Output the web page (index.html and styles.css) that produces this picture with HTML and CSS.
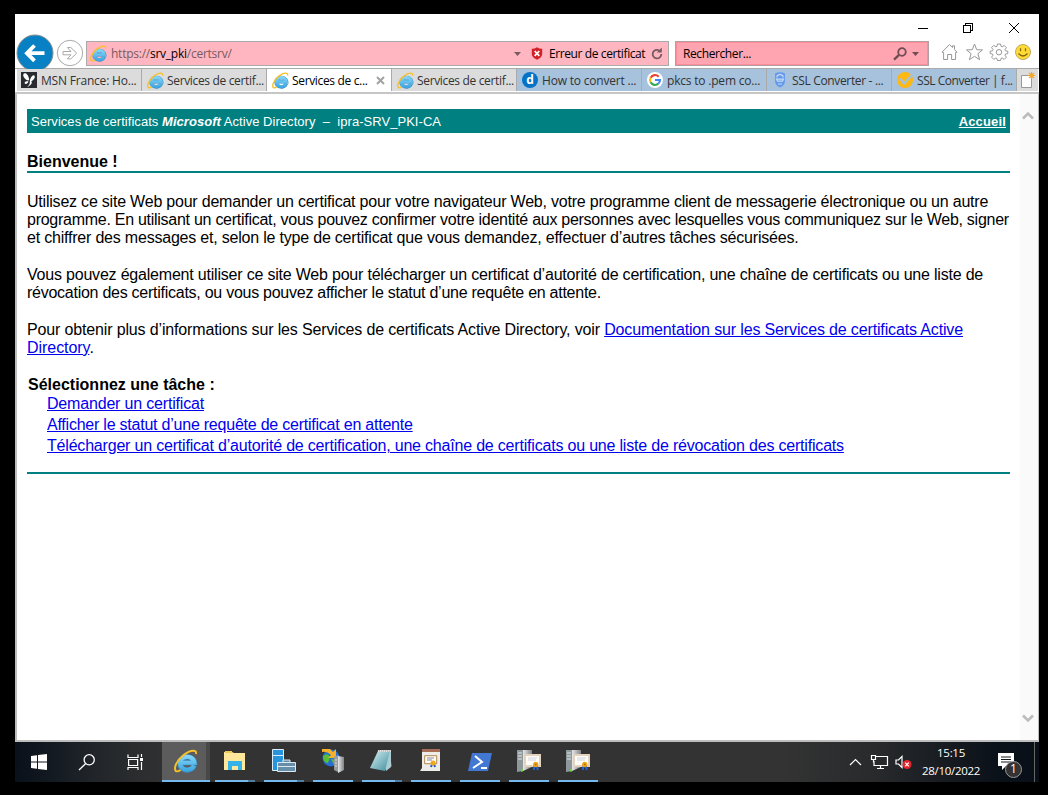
FILE: index.html
```html
<!DOCTYPE html>
<html lang="fr">
<head>
<meta charset="utf-8">
<title>Services de certificats Microsoft Active Directory</title>
<link rel="stylesheet" href="styles.css">
</head>
<body>
<svg class="defs" width="0" height="0" aria-hidden="true">
  <defs>
    <linearGradient id="ieBlue" gradientUnits="userSpaceOnUse" x1="0" y1="3" x2="0" y2="15"><stop offset="0" stop-color="#8fdcfb"/><stop offset="1" stop-color="#3aa5e2"/></linearGradient>
    <linearGradient id="metal" x1="0" x2="1"><stop offset="0" stop-color="#e8e8e8"/><stop offset="1" stop-color="#7d8387"/></linearGradient>
    <linearGradient id="glass" x1="0" y1="0" x2="1" y2="1"><stop offset="0" stop-color="#d7f2f4"/><stop offset="1" stop-color="#3f8c9c"/></linearGradient>
    <symbol id="ie" viewBox="0 0 16 16">
      <path d="M13.5 11A4.9 4.4 0 1 1 13.7 9.2H5.4" fill="none" stroke="#3b8fc4" stroke-width="3.4"/>
      <path d="M13.3 11A4.8 4.3 0 1 1 13.6 9.2H5.4" fill="none" stroke="url(#ieBlue)" stroke-width="2.7"/>
      <path d="M14.6 3.4C15 1.8 14.3 1.1 12.8 1.1 9 1.1 2.8 6 1.1 10.8.2 13.4.7 15.1 2.4 14.9c.8-.1 1.4-.5 2-.9" fill="none" stroke="#f6c12c" stroke-width="1.3"/>
    </symbol>
    <symbol id="certserver" viewBox="0 0 26 24">
      <path d="M1 1h6v21l-6 1z" fill="#8e979a"/><path d="M7 1h9v17l-9 4z" fill="url(#metal)"/>
      <path d="M2 4h4M2 7h4M2 10h4" stroke="#dfe6e8"/><circle cx="6" cy="21.5" r="1.2" fill="#69df39"/>
      <path d="M8 5h17v13H8z" fill="#e5d2bd"/><path d="M10 7h13v9H10z" fill="#fffdf8"/>
      <path d="M12 9h9M12 11h8" stroke="#d1d4df"/><path d="M18.5 17l-.8 4M21 17l.8 4" stroke="#2464d5" stroke-width="2"/>
      <circle cx="19.7" cy="15.5" r="2.7" fill="#efa51b"/><circle cx="19.7" cy="15.5" r="1" fill="#bd7300"/>
    </symbol>
  </defs>
</svg>
<div class="window">
  <header class="chrome">
    <div class="caption">
      <svg width="104" height="14" viewBox="0 0 104 14" fill="none" stroke="#000" shape-rendering="crispEdges"><path d="M1 7.5h10M46.5 4.5h7v7h-7zM48.5 4V2.5h7v7H54"/><path d="M92 2l10 10M102 2L92 12" shape-rendering="auto"/></svg>
    </div>
    <div class="nav">
      <svg class="back" width="38" height="35" viewBox="0 0 38 35"><circle cx="19" cy="19" r="18" fill="#0881c4" stroke="#8c8f91"/><path d="M28.5 19.2H12M18.5 11.5l-7.6 7.7 7.6 7.7" fill="none" stroke="#fff" stroke-width="3.8"/></svg>
      <svg class="forward" width="28" height="28" viewBox="0 0 28 28" fill="#fff" stroke="#aaa"><circle cx="14" cy="14" r="12.7"/><path d="M7 12.5h8l-3.6-4h3.4l5.9 5.6-5.9 5.8h-3.4l3.6-4.1H7z"/></svg>
      <div class="address">
        <svg class="addr-ie" width="17" height="17"><use href="#ie"/></svg>
        <span class="url">https://<b>srv_pki</b>/certsrv/</span>
        <svg width="7" height="4" viewBox="0 0 7 4"><path d="M0 0h7L3.5 4z" fill="#765b60"/></svg>
        <svg class="shield" width="12" height="13" viewBox="0 0 12 13"><path d="M.8 1.8Q3.5 2 6 .2q2.5 1.8 5.2 1.6V7Q11 10.5 6 12.8 1 10.5.8 7z" fill="#d31f27"/><path d="M3.7 4l4.6 4.8M8.3 4L3.7 8.8" stroke="#fff" stroke-width="1.8"/></svg>
        <span class="cert-error">Erreur de certificat</span>
        <svg class="reload" width="12" height="13" viewBox="0 0 12 13"><path d="M10.3 7A4.3 4.3 0 1 1 8 3.3" fill="none" stroke="#775a60" stroke-width="1.8"/><path d="M10.8.5v5H5.8z" fill="#775a60"/></svg>
      </div>
      <div class="search">
        <span>Rechercher...</span>
        <svg width="27" height="14" viewBox="0 0 27 14"><circle cx="9" cy="5" r="3.8" fill="none" stroke="#6f4d53" stroke-width="1.8"/><path d="M6 7.8L1 12.6" stroke="#6f4d53" stroke-width="2.3"/><path d="M19 5h7l-3.5 4z" fill="#6f4d53"/></svg>
      </div>
      <svg class="tools" width="92" height="18" viewBox="0 0 92 18" fill="#fff" stroke="#989898">
        <path d="M1 9.2L8.5 1.5l3 3V2.8h2v3.7L16 9.2l-1.4.3V16.5h-4v-5h-4v5h-4V9.5z"/>
        <path d="M33.5 1l2.2 5.7 5.8.2-4.6 3.8 1.7 6-5.1-3.4-5.1 3.4 1.7-6-4.6-3.8 5.8-.2z"/>
        <path d="M56.4 1h3.2l.4 2.3 1.2.5 2-1.4 2.2 2.2-1.4 2 .5 1.2 2.3.4v2.4l-2.3.4-.5 1.2 1.4 2-2.2 2.2-2-1.4-1.2.5-.4 2h-3.2l-.4-2-1.2-.5-2 1.4-2.2-2.2 1.4-2-.5-1.2-2.3-.4V8.2l2.3-.4.5-1.2-1.4-2 2.2-2.2 2 1.4 1.2-.5z"/><circle cx="58" cy="9.2" r="2.7"/>
        <circle cx="82" cy="9" r="7.5" fill="#ffdc35" stroke="#c2a85b"/><path d="M79.5 5.2v3M84.5 5.2v3M77.5 10.5q4.5 5 9 0" fill="none" stroke="#866514" stroke-width="1.3"/>
      </svg>
    </div>
    <div class="tabs">
      <div class="tab first"><svg width="16" height="16" viewBox="0 0 16 16"><path d="M0 0h16v16H0z" fill="#292b30"/><path d="M7.6 8.6C4.2 8 1.8 4.5 2.3 2.2 3.6.4 7 1.2 8.2 7.6zM7.4 9.4c-2-.2-4 .4-3.8 1.8 1 1.4 3.2.6 3.8-1.8zM8.8 9.5C9 6 11.5 2.5 13.3 3.4c1.4 1.6-.3 4.5-3 5.8 1.5 1.8-.6 4.5-4.2 5.8 2-1.8 3-3.3 2.7-5.5z" fill="#fff"/></svg><span>MSN France: Ho...</span></div>
      <div class="tab"><svg width="17" height="17"><use href="#ie"/></svg><span>Services de certif...</span></div>
      <div class="tab active"><svg width="17" height="17"><use href="#ie"/></svg><span>Services de c...</span><svg class="close" width="9" height="9" viewBox="0 0 9 9"><path d="M1 1l7 7M8 1L1 8" stroke="#a2a2a2" stroke-width="2"/></svg></div>
      <div class="tab"><svg width="17" height="17"><use href="#ie"/></svg><span>Services de certif...</span></div>
      <div class="tab blue"><i class="letter-d">d</i><span class="wide">How to convert ...</span></div>
      <div class="tab blue"><svg width="16" height="16" viewBox="0 0 16 16" fill="none" stroke-width="2.1"><circle cx="8" cy="8" r="8" fill="#fff"/><path d="M11.7 4.7A5 5 0 0 0 3.6 5.7" stroke="#ea4335"/><path d="M3.6 5.7a5 5 0 0 0 0 4.6" stroke="#fbbc05"/><path d="M3.6 10.3a5 5 0 0 0 7.8 1.3" stroke="#34a853"/><path d="M11.4 11.6A5 5 0 0 0 13 8H8" stroke="#4285f4"/></svg><span class="wide">pkcs to .pem co...</span></div>
      <div class="tab blue"><svg width="16" height="16" viewBox="0 0 16 16"><path d="M3 1.5Q8-1 13 1.5V9q0 4-5 6.5Q3 13 3 9z" fill="#6398ed"/><path d="M5 5.5V4q3-3 6 0v1.5M4.5 7.2h7l-1 2h-5z" fill="none" stroke="#c6ddf3" stroke-width="1.2"/><path d="M6 12h4" stroke="#c6ddf3"/></svg><span>SSL Converter - ...</span></div>
      <div class="tab blue"><svg width="16" height="16" viewBox="0 0 16 16"><circle cx="8" cy="8" r="8" fill="#fdb813"/><path d="M3 6.5l4 5L15 3" fill="none" stroke="#a6c2dc" stroke-width="2.3"/></svg><span class="tight">SSL Converter | f...</span></div>
      <div class="newtab"><svg width="16" height="17" viewBox="0 0 16 17"><path d="M1.5 3.5h10v12h-10z" fill="#fff" stroke="#999"/><path d="M11.5 0v7M8 3.5h7M9 1l5 5M14 1l-5 5" stroke="#f1a62a" stroke-width="1.2"/></svg></div>
    </div>
  </header>
  <main class="viewport">
    <div class="page">
      <div class="banner"><span>Services de certificats <b><em>Microsoft</em></b> Active Directory &nbsp;–&nbsp; ipra-SRV_PKI-CA</span><a href="#">Accueil</a></div>
      <h1>Bienvenue !</h1>
      <p><span class="line l1">Utilisez ce site Web pour demander un certificat pour votre navigateur Web, votre programme client de messagerie électronique ou un autre</span>
      <span class="line l2">programme. En utilisant un certificat, vous pouvez confirmer votre identité aux personnes avec lesquelles vous communiquez sur le Web, signer</span>
      <span class="line l3">et chiffrer des messages et, selon le type de certificat que vous demandez, effectuer d’autres tâches sécurisées.</span></p>
      <p><span class="line l4">Vous pouvez également utiliser ce site Web pour télécharger un certificat d’autorité de certification, une chaîne de certificats ou une liste de</span>
      <span class="line l5">révocation des certificats, ou vous pouvez afficher le statut d’une requête en attente.</span></p>
      <p><span class="line l6">Pour obtenir plus d’informations sur les Services de certificats Active Directory, voir <a href="#">Documentation sur les Services de certificats Active</a></span>
      <span class="line l7"><a href="#">Directory</a>.</span></p>
      <h2>Sélectionnez une tâche :</h2>
      <ul>
        <li><a class="t1" href="#">Demander un certificat</a></li>
        <li><a class="t2" href="#">Afficher le statut d’une requête de certificat en attente</a></li>
        <li><a class="t3" href="#">Télécharger un certificat d’autorité de certification, une chaîne de certificats ou une liste de révocation des certificats</a></li>
      </ul>
      <div class="rule"></div>
    </div>
    <div class="scrollbar">
      <svg width="12" height="9" viewBox="0 0 12 9"><path d="M1 7.5l5-5 5 5" fill="none" stroke="#bcbcbc" stroke-width="2.5"/></svg>
      <svg width="12" height="9" viewBox="0 0 12 9"><path d="M1 1.5l5 5 5-5" fill="none" stroke="#bcbcbc" stroke-width="2.5"/></svg>
    </div>
  </main>
  <footer class="taskbar">
    <div class="system">
      <svg width="16" height="16" viewBox="0 0 16 16" fill="#fff"><path d="M0 2l6-.8v6.3H0zM7 1l9-1v7.5H7zM0 8.5h6v6.3L0 14zM7 8.5h9V16l-9-1z"/></svg>
      <svg width="18" height="18" viewBox="0 0 18 18" fill="none" stroke="#fff" stroke-width="1.3"><circle cx="11.2" cy="5.8" r="5.1"/><path d="M7.5 9.7L1 16"/></svg>
      <svg width="17" height="16" viewBox="0 0 17 16" fill="none" stroke="#fff" stroke-width="1.2"><path d="M1 .5v3h10v-3M1.6 5.5h9v6h-9zM1 16v-2.5h10V16M14.5 0v3M14.5 8v8"/><path d="M13 4h3v3h-3z" fill="#fff" stroke="none"/></svg>
    </div>
    <div class="apps">
      <div class="app current"><svg width="24" height="24"><use href="#ie"/></svg></div>
      <div class="app stacked"><svg width="24" height="24" viewBox="0 0 24 24"><path d="M1 3h8l2 1h11v17H1z" fill="#ffe79c"/><path d="M2 2h7v2H2z" fill="#f0c951"/><path d="M5 12h14v9h-4v-4H9v4H5z" fill="#35b2e8"/></svg></div>
      <div class="app stacked"><svg width="26" height="26" viewBox="0 0 26 26"><path d="M1.5 1.5h11v21h-11z" fill="#2794dc" stroke="#d9eefa"/><path d="M2 7.5h10" stroke="#d9eefa"/><path d="M6.5 14.5h18v9h-18zM12 14v-2h7v2M7 18.5h17" fill="#668daa" stroke="#dce8ef"/></svg></div>
      <div class="app"><svg width="26" height="26" viewBox="0 0 26 26"><circle cx="11" cy="10" r="8.5" fill="#246fd0"/><path d="M3 8q5-4 7 1l-2 6q-5 0-5-7zM11 11l6 1-3 5z" fill="#58bf35"/><path d="M2 1h8l3 3 3-3v9H8l3-3Q7 3 2 4z" fill="#f6b128"/><path d="M14 9l4-2v17l-4-2z" fill="#959da0"/><path d="M18 8l6 1v13l-6 3z" fill="url(#metal)"/><path d="M15 12h2M15 15h2M15 18h2" stroke="#ddd"/></svg></div>
      <div class="app stacked"><svg width="26" height="26" viewBox="0 0 26 26"><path d="M20 4l3 14-5 4z" fill="#9a6f41"/><path d="M10 2h12l0 17-5 4z" fill="#a9cdd2"/><path d="M9 3l12 0-5 20L1 20z" fill="url(#glass)"/><path d="M9 3l13 0" stroke="#ddd" stroke-width="2" stroke-dasharray="1 1"/></svg></div>
      <div class="app"><svg width="26" height="26" viewBox="0 0 26 26"><path d="M4 2h18v21H2l2-3z" fill="#eeece8"/><path d="M4 1h18v3H4z" fill="#a86b55"/><path d="M6.7 7.7h12v8h-12z" fill="#fffdf5" stroke="#b4854e"/><path d="M9 10h7M9 12h5" stroke="#84899b"/><path d="M14 16l-1 3M16 16l1 3" stroke="#245dc0" stroke-width="2"/><circle cx="15" cy="15" r="2.5" fill="#f0a91c"/></svg></div>
      <div class="app"><svg width="26" height="24" viewBox="0 0 26 24"><path d="M5 4h20l-4 18H1z" fill="#4277d2"/><path d="M8 7l7 6-9 6M14 19h6" fill="none" stroke="#fff" stroke-width="2"/></svg></div>
      <div class="app"><svg width="26" height="24"><use href="#certserver"/></svg></div>
      <div class="app"><svg width="26" height="24"><use href="#certserver"/></svg></div>
    </div>
    <div class="tray">
      <svg width="64" height="18" viewBox="0 0 64 18" fill="none" stroke="#fff" stroke-width="1.2"><path d="M1 12l5.5-5.5L12 12M27 3.5h11.5v9H25V8M22.5 2.5h4v4h-4zM24.5 6.5v3M31.5 13v2.5M28 15.5h7M47 7h2.5L53 3.5v11L49.5 11H47z"/><circle cx="58" cy="11.5" r="4.5" fill="#e4252d" stroke="none"/><path d="M56.2 9.7l3.6 3.6M59.8 9.7l-3.6 3.6"/></svg>
      <div class="clock"><span>15:15</span><span>28/10/2022</span></div>
      <div class="notice"><svg width="17" height="17" viewBox="0 0 17 17"><path d="M0 0h16v13H8l-4 4v-4H0z" fill="#fff"/><path d="M3 4h10M3 6.5h10M3 9h10" stroke="#15181b"/></svg><span class="badge">1</span></div>
      <i class="peek"></i>
    </div>
  </footer>
</div>
</body>
</html>
```
FILE: styles.css
```css
* { box-sizing: border-box; }
body { margin: 0; width: 1048px; height: 795px; padding: 14px 0 0 15px; background: #000; overflow: hidden; font-family: "Open Sans", "Noto Sans", sans-serif; font-size: 12px; color: #000; }
svg { display: block; flex: none; }
.defs { position: absolute; }
.window { width: 1024px; height: 768px; display: flex; flex-direction: column; background: #fff; }
.chrome { height: 80px; border-bottom: 2px solid #c6c6c6; flex: none; }
.caption { height: 20px; display: flex; justify-content: flex-end; padding: 7px 18px 0 0; }
.nav { height: 34px; display: flex; align-items: flex-start; }
.back { margin-left: 1px; }
.forward { margin: 5px 2px 0; }
.address { width: 583px; height: 25px; margin: 7px 6px 0 0; border: 1px solid #aaa; background: #ffb6c1; display: flex; align-items: center; padding: 0 5px 0 3px; }
.url { flex: 1; margin-left: 4px; color: #765b60; letter-spacing: -.25px; white-space: nowrap; }
.url b { color: #000; font-weight: 400; }
.shield { margin: 0 6px 0 10px; }
.cert-error { width: 97px; letter-spacing: -.4px; white-space: nowrap; }
.reload { margin-left: 5px; }
.search { width: 254px; height: 25px; margin-top: 7px; border: 1px solid #b0a0a3; background: #ffa5b1; box-shadow: inset 0 0 0 1px #ff8a98; display: flex; justify-content: space-between; align-items: center; padding: 0 8px 0 7px; letter-spacing: -.4px; }
.tools { margin: 9px 0 0 12px; }
.tabs { height: 24px; border-top: 1px solid #aaa; display: flex; padding-left: 2px; border-bottom: 1px solid #fff; }
.tab { width: 125px; border-right: 1px solid #aaa; background: #dcdcdc; color: #333; display: flex; align-items: center; padding-left: 5px; white-space: nowrap; letter-spacing: -.34px; }
.tab span { margin-left: 3px; }
.tab.first { padding-left: 4px; letter-spacing: -.2px; }
.tab.first span { margin-left: 4px; }
.tab .wide { letter-spacing: -.2px; }
.tab .tight { letter-spacing: -.45px; }
.tab.active { background: #fff; color: #000; }
.tab.blue { background: #a6c2dc; }
.tab.blue span { margin-left: 4px; }
.close { margin-left: 8px; }
.letter-d { width: 16px; height: 16px; border-radius: 50%; background: #0572c6; color: #fff; font: bold 12px/15px "Open Sans", sans-serif; text-align: center; }
.newtab { flex: 1; background: #dcdcdc; padding: 3px 0 0 3px; margin-right: 1px; }
.viewport { height: 648px; display: flex; border: solid #bdbdbd; border-width: 0 1px 2px 2px; }
.page { width: 993px; flex: none; padding: 15px 0 0 10px; font: 16px/18px "Liberation Sans", Arial, sans-serif; }
.banner { height: 24px; background: #008080; color: #fff; font-size: 13px; line-height: 25px; display: flex; justify-content: space-between; padding: 0 4px; white-space: nowrap; letter-spacing: .04px; }
.banner a { color: #fff; font-weight: bold; letter-spacing: .15px; }
h1 { margin: 20px 0 20px; height: 20px; border-bottom: 2px solid #008080; font-size: 16px; line-height: 18px; }
p { margin: 0 0 19px; }
.line { display: block; white-space: nowrap; }
.l1 { letter-spacing: -.212px; }
.l2 { letter-spacing: -.269px; }
.l3 { letter-spacing: -.204px; }
.l4 { letter-spacing: -.202px; }
.l5 { letter-spacing: -.26px; }
.l6 { letter-spacing: -.148px; }
.l6 a { letter-spacing: -.145px; }
.l7 { letter-spacing: -.05px; }
.t1 { letter-spacing: -.18px; }
.t2 { letter-spacing: -.228px; }
.t3 { letter-spacing: -.195px; }
a { color: #00e; }
h2 { margin: 0 0 0 1px; font-size: 16px; line-height: 18px; }
ul { list-style: none; margin: 1px 0 0 20px; padding: 0; }
li { height: 21px; white-space: nowrap; }
.rule { height: 2px; margin-top: 14px; background: #008080; }
.scrollbar { flex: 1; margin-left: 10px; background: #fafafa; padding: 17px 2px; display: flex; flex-direction: column; justify-content: space-between; }
.taskbar { height: 40px; flex: none; display: flex; background: linear-gradient(90deg, #08101a 0, #22262a 8%, #333 16%, #333 75%, #282a2c 84%, #0b1119 96%, #080f18); color: #fff; }
.system { width: 147px; display: flex; padding: 12px 0 0 16px; gap: 31px; }
.apps { display: flex; gap: 9px; }
.app { width: 40px; height: 40px; display: flex; align-items: center; justify-content: center; border-bottom: 2px solid #76b9ed; }
.app.stacked { border-image: linear-gradient(90deg, #76b9ed 80%, #537d9e 80%) 1; border-width: 0 0 2px; }
.app.current { width: 48px; margin-right: -4px; background: linear-gradient(90deg, #5c5c5c 92%, #484848 92%); }
.tray { margin-left: auto; display: flex; }
.tray > svg { margin-top: 11px; }
.clock { width: 70px; margin-left: 3px; padding-top: 2px; line-height: 18px; display: flex; flex-direction: column; align-items: center; font-size: 11.5px; letter-spacing: -.3px; }
.notice { position: relative; width: 37px; padding: 11px 0 0 12px; }
.badge { position: absolute; left: 19px; top: 19px; width: 17px; height: 17px; border: 1px solid #999; border-radius: 50%; background: #333; text-align: center; line-height: 14px; font-size: 12px; }
.peek { width: 1px; background: #666; margin: 0 4px 0 11px; }
```
